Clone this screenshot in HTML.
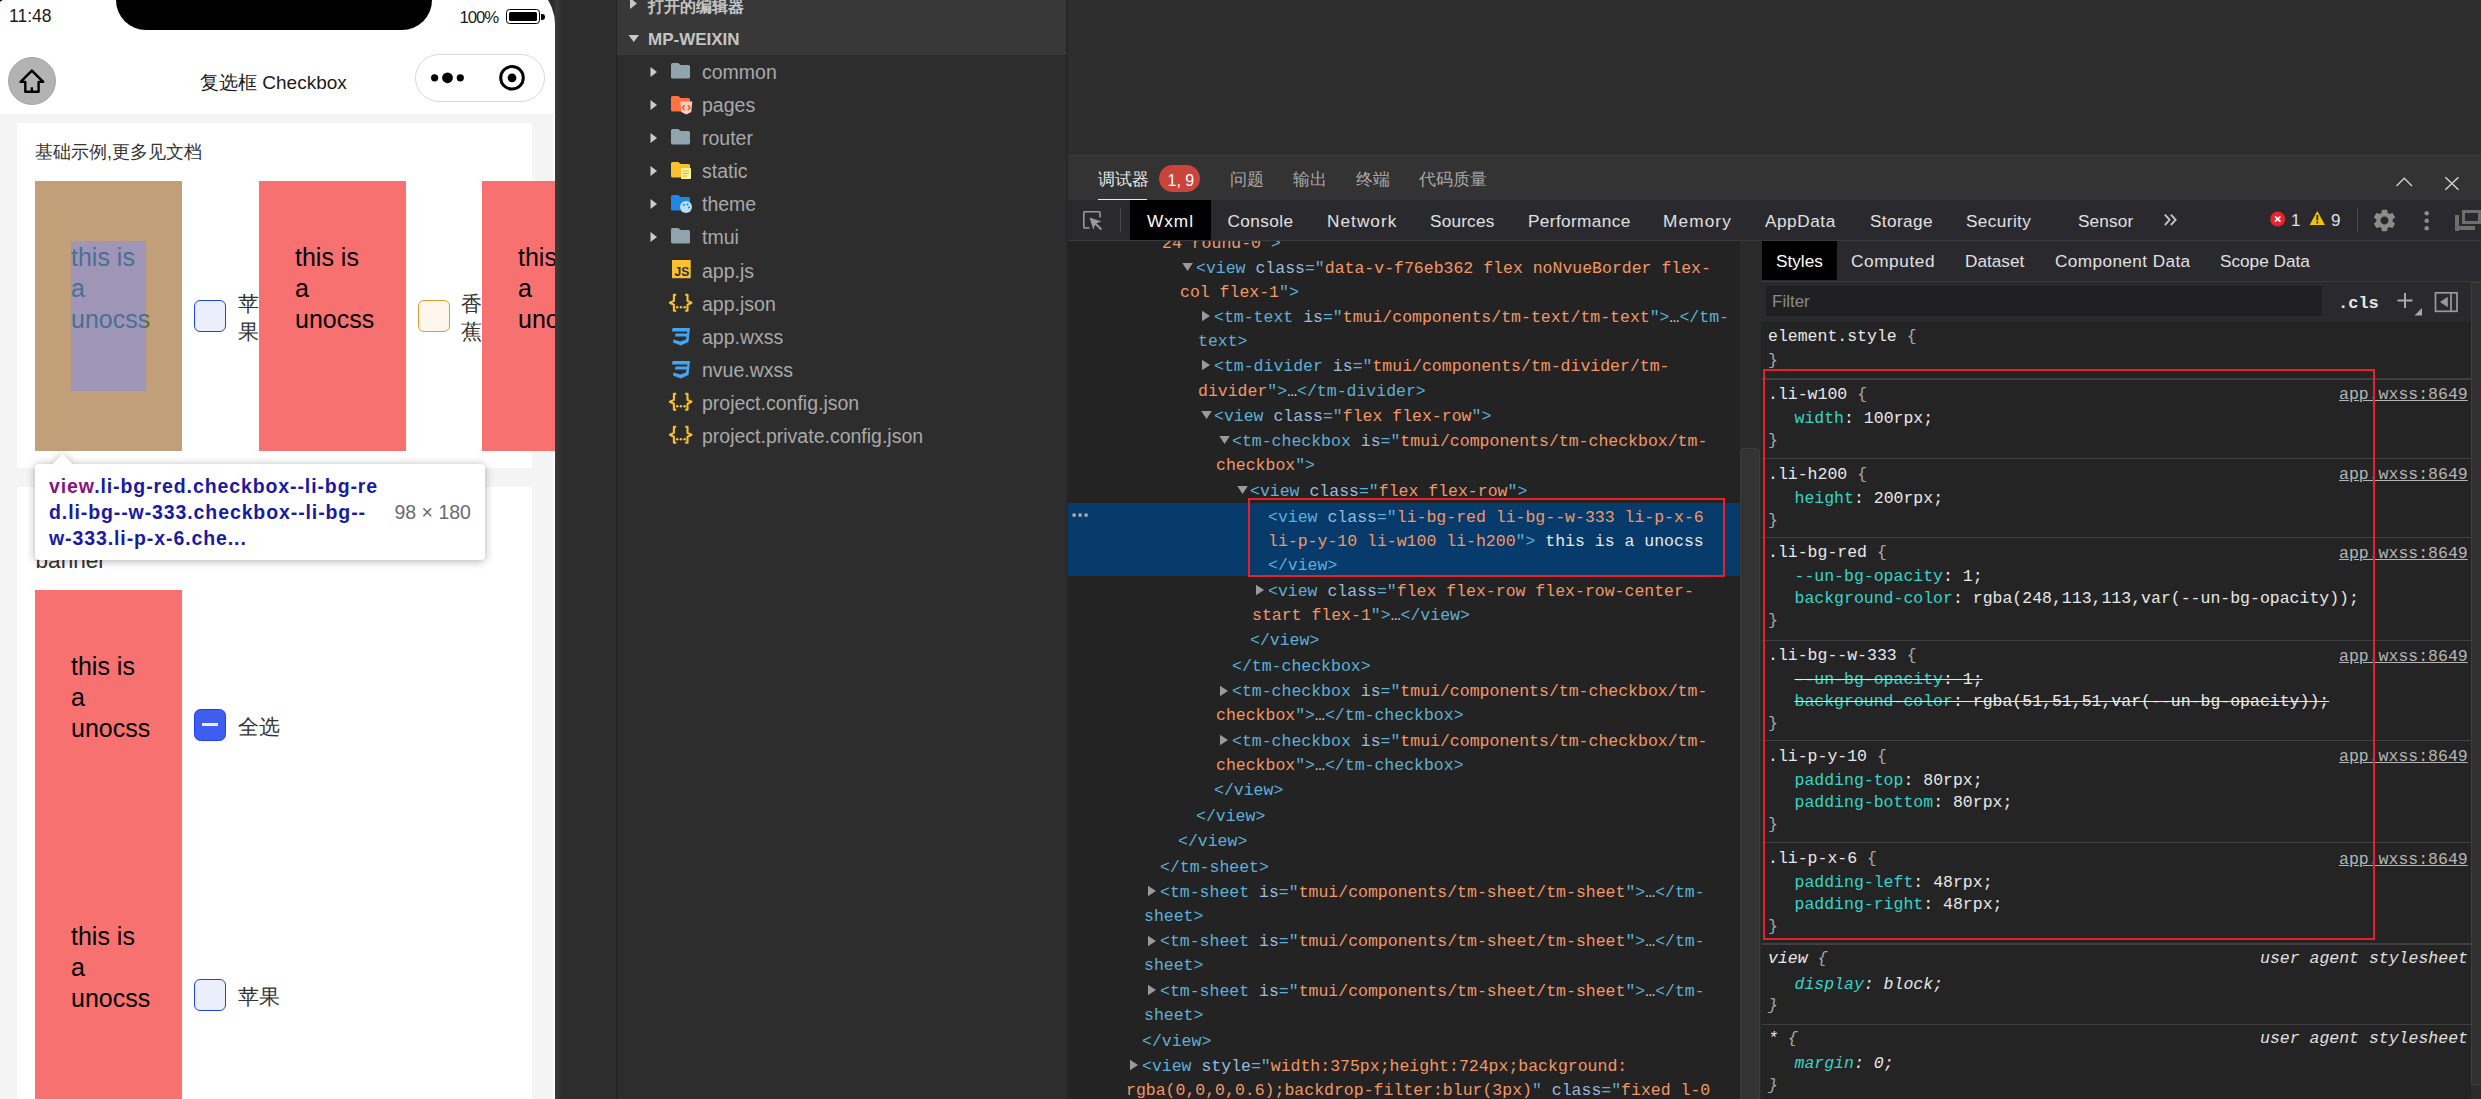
<!DOCTYPE html>
<html><head><meta charset="utf-8"><title>WeChat DevTools</title>
<style>
html,body{margin:0;padding:0;}
body{width:2481px;height:1099px;overflow:hidden;position:relative;font-family:'Liberation Sans', sans-serif;}
div{position:absolute;}
span{position:static;}
</style></head><body>
<div style="left:0px;top:0px;width:2481px;height:1099px;background:#2e2e2e"></div>
<div style="left:0;top:-20px;width:555px;height:1119px;background:#fff;border-top-right-radius:44px;overflow:hidden">
<div style="left:0;top:20px;width:555px;height:1099px;position:absolute">
<div style="left:0px;top:114px;width:553px;height:985px;background:#f4f4f4"></div>
<div style="left:116px;top:-40px;width:316px;height:70px;background:#000;border-radius:0 0 30px 30px"></div>
<div style="left:-6px;top:-6px;width:9px;height:8px;background:#000;border-radius:50%"></div>
<div style="left:9px;top:4.84px;line-height:23px;font-family:'Liberation Sans', sans-serif;font-size:17.5px;color:#1a1a1a;white-space:pre;">11:48</div>
<div style="left:459.5px;top:7.38px;line-height:22px;font-family:'Liberation Sans', sans-serif;font-size:16.8px;color:#1a1a1a;white-space:pre;letter-spacing:-1.05px">100%</div>
<div style="left:506px;top:8.9px;width:34px;height:15px;border:1.6px solid #000;border-radius:3.5px;box-sizing:border-box"></div>
<div style="left:509.3px;top:12.3px;width:27.4px;height:9px;background:#000;border-radius:1.5px"></div>
<div style="left:541px;top:14px;width:3.5px;height:5.5px;background:#000;border-radius:0 3px 3px 0"></div>
<div style="left:8px;top:57px;width:48px;height:48px;background:#b3b3b3;border-radius:50%;border:1px solid #a6a6a6;box-sizing:border-box"></div>
<svg style="position:absolute;left:16px;top:65px;" width="32" height="32" viewBox="0 0 32 32"><path d="M4.6 16.9 L15.9 5.6 L27.2 16.9 H22.6 V26.75 H9.3 V16.9 Z" fill="none" stroke="#000" stroke-width="2.4" stroke-linejoin="round"/><path d="M15.85 22.3 V26.75" stroke="#000" stroke-width="2.3"/></svg>
<div style="left:200px;top:69.92px;line-height:25px;font-family:'Liberation Sans', sans-serif;font-size:19px;color:#1a1a1a;white-space:pre;">复选框 Checkbox</div>
<div style="left:414.5px;top:54px;width:130.5px;height:47.5px;border:1px solid #d9d9d9;border-radius:24px;box-sizing:border-box;background:#fff"></div>
<svg style="position:absolute;left:425px;top:63px;" width="110" height="30" viewBox="0 0 110 30"><circle cx="9.6" cy="14.8" r="3.6" fill="#000"/><circle cx="22.5" cy="14.8" r="5.4" fill="#000"/><circle cx="35.3" cy="14.8" r="3.6" fill="#000"/><circle cx="87" cy="14.8" r="11.3" fill="none" stroke="#000" stroke-width="3"/><circle cx="87" cy="14.8" r="4.4" fill="#000"/></svg>
<div style="left:17px;top:123px;width:515px;height:345px;background:#fff"></div>
<div style="left:35px;top:141.40px;line-height:23px;font-family:'Liberation Sans', sans-serif;font-size:17.6px;color:#333;white-space:pre;">基础示例,更多见文档</div>
<div style="left:35px;top:181px;width:147px;height:270px;background:#f87171"></div>
<div style="left:71px;top:241.34px;line-height:32px;font-family:'Liberation Sans', sans-serif;font-size:25px;color:#000;white-space:pre;">this is</div>
<div style="left:71px;top:272.34px;line-height:32px;font-family:'Liberation Sans', sans-serif;font-size:25px;color:#000;white-space:pre;">a</div>
<div style="left:71px;top:303.34px;line-height:32px;font-family:'Liberation Sans', sans-serif;font-size:25px;color:#000;white-space:pre;">unocss</div>
<div style="left:259px;top:181px;width:147px;height:270px;background:#f87171"></div>
<div style="left:295px;top:241.34px;line-height:32px;font-family:'Liberation Sans', sans-serif;font-size:25px;color:#000;white-space:pre;">this is</div>
<div style="left:295px;top:272.34px;line-height:32px;font-family:'Liberation Sans', sans-serif;font-size:25px;color:#000;white-space:pre;">a</div>
<div style="left:295px;top:303.34px;line-height:32px;font-family:'Liberation Sans', sans-serif;font-size:25px;color:#000;white-space:pre;">unocss</div>
<div style="left:482px;top:181px;width:147px;height:270px;background:#f87171"></div>
<div style="left:518px;top:241.34px;line-height:32px;font-family:'Liberation Sans', sans-serif;font-size:25px;color:#000;white-space:pre;">this is</div>
<div style="left:518px;top:272.34px;line-height:32px;font-family:'Liberation Sans', sans-serif;font-size:25px;color:#000;white-space:pre;">a</div>
<div style="left:518px;top:303.34px;line-height:32px;font-family:'Liberation Sans', sans-serif;font-size:25px;color:#000;white-space:pre;">unocss</div>
<div style="left:35px;top:181px;width:147px;height:270px;box-sizing:border-box;border-style:solid;border-color:rgba(147,196,125,.55);border-width:60px 36px"></div>
<div style="left:71px;top:241px;width:75px;height:150px;background:rgba(111,168,220,.66)"></div>
<div style="left:194.3px;top:300px;width:31.5px;height:31.5px;box-sizing:border-box;border:1.6px solid #1f3ff2;border-radius:6px;background:#ebeefc"></div>
<div style="left:237.5px;top:290.22px;line-height:27px;font-family:'Liberation Sans', sans-serif;font-size:21px;color:#333;white-space:pre;">苹</div>
<div style="left:237.5px;top:318.22px;line-height:27px;font-family:'Liberation Sans', sans-serif;font-size:21px;color:#333;white-space:pre;">果</div>
<div style="left:418px;top:300px;width:31.5px;height:31.5px;box-sizing:border-box;border:1.6px solid #e39a2c;border-radius:6px;background:#fff7ec"></div>
<div style="left:461px;top:290.22px;line-height:27px;font-family:'Liberation Sans', sans-serif;font-size:21px;color:#333;white-space:pre;">香</div>
<div style="left:461px;top:318.22px;line-height:27px;font-family:'Liberation Sans', sans-serif;font-size:21px;color:#333;white-space:pre;">蕉</div>
<div style="left:17px;top:487px;width:515px;height:612px;background:#fff"></div>
<div style="left:35.5px;top:545.67px;line-height:29px;font-family:'Liberation Sans', sans-serif;font-size:22.6px;color:#333;white-space:pre;">banner</div>
<div style="left:35px;top:590px;width:147px;height:509px;background:#f87171"></div>
<div style="left:71px;top:650.34px;line-height:32px;font-family:'Liberation Sans', sans-serif;font-size:25px;color:#000;white-space:pre;">this is</div>
<div style="left:71px;top:681.34px;line-height:32px;font-family:'Liberation Sans', sans-serif;font-size:25px;color:#000;white-space:pre;">a</div>
<div style="left:71px;top:712.34px;line-height:32px;font-family:'Liberation Sans', sans-serif;font-size:25px;color:#000;white-space:pre;">unocss</div>
<div style="left:71px;top:920.34px;line-height:32px;font-family:'Liberation Sans', sans-serif;font-size:25px;color:#000;white-space:pre;">this is</div>
<div style="left:71px;top:951.34px;line-height:32px;font-family:'Liberation Sans', sans-serif;font-size:25px;color:#000;white-space:pre;">a</div>
<div style="left:71px;top:982.34px;line-height:32px;font-family:'Liberation Sans', sans-serif;font-size:25px;color:#000;white-space:pre;">unocss</div>
<div style="left:194.1px;top:709px;width:31.8px;height:31.8px;box-sizing:border-box;border:1.3px solid #1c3ff0;border-radius:6.5px;background:#3f5ef0"></div>
<div style="left:202.1px;top:723.3px;width:16px;height:3px;background:#e8ecff"></div>
<div style="left:237.5px;top:713.22px;line-height:27px;font-family:'Liberation Sans', sans-serif;font-size:21px;color:#333;white-space:pre;">全选</div>
<div style="left:194.3px;top:979px;width:31.5px;height:31.5px;box-sizing:border-box;border:1.6px solid #1f3ff2;border-radius:6px;background:#ebeefc"></div>
<div style="left:237.5px;top:983.22px;line-height:27px;font-family:'Liberation Sans', sans-serif;font-size:21px;color:#333;white-space:pre;">苹果</div>
<svg style="position:absolute;left:20px;top:440px;filter:drop-shadow(0 1px 4px rgba(0,0,0,.32))" width="480" height="140" viewBox="0 0 480 140"><path d="M19 24 H32.5 L42.6 13.8 L52.4 24 H461 Q465 24 465 28 V116 Q465 120 461 120 H19 Q15 120 15 116 V28 Q15 24 19 24 Z" fill="#fff"/></svg>
<div style="left:49px;top:473.74px;line-height:25px;font-family:'Liberation Sans', sans-serif;font-size:19.5px;color:#1a1aa6;white-space:pre;font-weight:bold;letter-spacing:0.9px"><span style="color:#881280">view</span>.li-bg-red.checkbox--li-bg-re</div>
<div style="left:49px;top:499.74px;line-height:25px;font-family:'Liberation Sans', sans-serif;font-size:19.5px;color:#1a1aa6;white-space:pre;font-weight:bold;letter-spacing:0.9px">d.li-bg--w-333.checkbox--li-bg--</div>
<div style="left:49px;top:525.74px;line-height:25px;font-family:'Liberation Sans', sans-serif;font-size:19.5px;color:#1a1aa6;white-space:pre;font-weight:bold;letter-spacing:0.9px">w-333.li-p-x-6.che...</div>
<div style="left:394.5px;top:499.74px;line-height:25px;font-family:'Liberation Sans', sans-serif;font-size:19.5px;color:#6b6b6b;white-space:pre;">98 × 180</div>
</div></div>
<div style="left:555px;top:0px;width:7px;height:1099px;background:linear-gradient(90deg,#3b3b3b,#2e2e2e)"></div>
<div style="left:615.6px;top:0px;width:1.6px;height:1099px;background:#222222"></div>
<div style="left:617.2px;top:0px;width:448.8px;height:1099px;background:#2d2d2d"></div>
<div style="left:617.2px;top:0px;width:448.8px;height:55px;background:#383838"></div>
<div style="left:1066px;top:0px;width:2px;height:1099px;background:#272727"></div>
<svg style="position:absolute;left:626px;top:-2px;" width="14" height="14" viewBox="0 0 14 14"><path d="M4 0 L11 5.5 L4 11 Z" fill="#c8c8c8"/></svg>
<div style="left:648px;top:-3.65px;line-height:21px;font-family:'Liberation Sans', sans-serif;font-size:16.3px;color:#c5c5c5;white-space:pre;font-weight:bold">打开的编辑器</div>
<svg style="position:absolute;left:628px;top:34px;" width="14" height="10" viewBox="0 0 14 10"><path d="M0.5 1 L11 1 L5.75 8 Z" fill="#c8c8c8"/></svg>
<div style="left:648px;top:28.71px;line-height:22px;font-family:'Liberation Sans', sans-serif;font-size:17px;color:#c5c5c5;white-space:pre;font-weight:bold">MP-WEIXIN</div>
<svg style="position:absolute;left:649px;top:66px;" width="10" height="12" viewBox="0 0 10 12"><path d="M1.5 1 L8 6 L1.5 11 Z" fill="#cccccc"/></svg>
<svg style="position:absolute;left:670px;top:62px;" width="22" height="18" viewBox="0 0 22 18"><path d="M1 2.5 Q1 1 2.5 1 H8.5 L10.5 3 H18.5 Q20 3 20 4.5 V15 Q20 16.5 18.5 16.5 H2.5 Q1 16.5 1 15 Z" fill="#90a4ae"/></svg>
<div style="left:702px;top:59.94px;line-height:25px;font-family:'Liberation Sans', sans-serif;font-size:19.5px;color:#a9a9a9;white-space:pre;">common</div>
<svg style="position:absolute;left:649px;top:99px;" width="10" height="12" viewBox="0 0 10 12"><path d="M1.5 1 L8 6 L1.5 11 Z" fill="#cccccc"/></svg>
<svg style="position:absolute;left:670px;top:95px;" width="24" height="20" viewBox="0 0 24 20"><path d="M1 2.5 Q1 1 2.5 1 H8.5 L10.5 3 H18.5 Q20 3 20 4.5 V15 Q20 16.5 18.5 16.5 H2.5 Q1 16.5 1 15 Z" fill="#ff7043"/><path d="M10.3 6.4 H22.3 L21.3 17 L16.3 19.4 L11.3 17 Z" fill="#ffccbc"/><path d="M14.6 10.2 L12.6 12.6 L14.6 15 M18 10.2 L20 12.6 L18 15" stroke="#f4511e" stroke-width="1.4" fill="none"/></svg>
<div style="left:702px;top:92.94px;line-height:25px;font-family:'Liberation Sans', sans-serif;font-size:19.5px;color:#a9a9a9;white-space:pre;">pages</div>
<svg style="position:absolute;left:649px;top:132px;" width="10" height="12" viewBox="0 0 10 12"><path d="M1.5 1 L8 6 L1.5 11 Z" fill="#cccccc"/></svg>
<svg style="position:absolute;left:670px;top:128px;" width="22" height="18" viewBox="0 0 22 18"><path d="M1 2.5 Q1 1 2.5 1 H8.5 L10.5 3 H18.5 Q20 3 20 4.5 V15 Q20 16.5 18.5 16.5 H2.5 Q1 16.5 1 15 Z" fill="#90a4ae"/></svg>
<div style="left:702px;top:125.94px;line-height:25px;font-family:'Liberation Sans', sans-serif;font-size:19.5px;color:#a9a9a9;white-space:pre;">router</div>
<svg style="position:absolute;left:649px;top:165px;" width="10" height="12" viewBox="0 0 10 12"><path d="M1.5 1 L8 6 L1.5 11 Z" fill="#cccccc"/></svg>
<svg style="position:absolute;left:670px;top:161px;" width="24" height="20" viewBox="0 0 24 20"><path d="M1 2.5 Q1 1 2.5 1 H8.5 L10.5 3 H18.5 Q20 3 20 4.5 V15 Q20 16.5 18.5 16.5 H2.5 Q1 16.5 1 15 Z" fill="#fbc02d"/><rect x="11" y="7" width="10" height="11" rx="1" fill="#fff59d"/><path d="M13 10 H19 M13 12.5 H19 M13 15 H17" stroke="#f9a825" stroke-width="1.2"/></svg>
<div style="left:702px;top:158.94px;line-height:25px;font-family:'Liberation Sans', sans-serif;font-size:19.5px;color:#a9a9a9;white-space:pre;">static</div>
<svg style="position:absolute;left:649px;top:198px;" width="10" height="12" viewBox="0 0 10 12"><path d="M1.5 1 L8 6 L1.5 11 Z" fill="#cccccc"/></svg>
<svg style="position:absolute;left:670px;top:194px;" width="24" height="20" viewBox="0 0 24 20"><path d="M1 2.5 Q1 1 2.5 1 H8.5 L10.5 3 H18.5 Q20 3 20 4.5 V15 Q20 16.5 18.5 16.5 H2.5 Q1 16.5 1 15 Z" fill="#1e88e5"/><circle cx="16" cy="13" r="6" fill="#bbdefb"/><circle cx="14" cy="11" r="1.1" fill="#1e88e5"/><circle cx="17.5" cy="10.5" r="1.1" fill="#1e88e5"/><circle cx="19" cy="13.5" r="1.1" fill="#1e88e5"/></svg>
<div style="left:702px;top:191.94px;line-height:25px;font-family:'Liberation Sans', sans-serif;font-size:19.5px;color:#a9a9a9;white-space:pre;">theme</div>
<svg style="position:absolute;left:649px;top:231px;" width="10" height="12" viewBox="0 0 10 12"><path d="M1.5 1 L8 6 L1.5 11 Z" fill="#cccccc"/></svg>
<svg style="position:absolute;left:670px;top:227px;" width="22" height="18" viewBox="0 0 22 18"><path d="M1 2.5 Q1 1 2.5 1 H8.5 L10.5 3 H18.5 Q20 3 20 4.5 V15 Q20 16.5 18.5 16.5 H2.5 Q1 16.5 1 15 Z" fill="#90a4ae"/></svg>
<div style="left:702px;top:224.94px;line-height:25px;font-family:'Liberation Sans', sans-serif;font-size:19.5px;color:#a9a9a9;white-space:pre;">tmui</div>
<svg style="position:absolute;left:671.5px;top:260px;" width="19" height="19" viewBox="0 0 19 19"><rect x="0" y="0" width="18.7" height="18.2" fill="#fbc02d"/><text x="17.3" y="16.3" font-family="Liberation Sans" font-weight="bold" font-size="12" fill="#2d2d2d" text-anchor="end">JS</text></svg>
<div style="left:702px;top:258.94px;line-height:25px;font-family:'Liberation Sans', sans-serif;font-size:19.5px;color:#a9a9a9;white-space:pre;">app.js</div>
<svg style="position:absolute;left:668px;top:293px;" width="26" height="20" viewBox="0 0 26 20"><path d="M8.2 1.8 H5.9 V7.9 L1.9 9.8 L5.9 11.7 V17.8 H8.2 M17.2 1.8 H19.5 V7.9 L23.5 9.8 L19.5 11.7 V17.8 H17.2" fill="none" stroke="#fbc02d" stroke-width="2.1" stroke-linejoin="round"/><circle cx="9.2" cy="14.2" r="1.25" fill="#fbc02d"/><circle cx="12.9" cy="14.2" r="1.25" fill="#fbc02d"/><circle cx="16.6" cy="14.2" r="1.25" fill="#fbc02d"/></svg>
<div style="left:702px;top:291.94px;line-height:25px;font-family:'Liberation Sans', sans-serif;font-size:19.5px;color:#a9a9a9;white-space:pre;">app.json</div>
<svg style="position:absolute;left:670px;top:327px;" width="22" height="20" viewBox="0 0 22 20"><path d="M2.5 1 H20 L18.5 15 L10.8 18.5 L3 15.5 L3.5 12.5 L10.5 14.5 L16 12.5 L16.5 9.5 H5 L5.5 6.5 H17 L17.3 4.5 H2 Z" fill="#42a5f5"/></svg>
<div style="left:702px;top:324.94px;line-height:25px;font-family:'Liberation Sans', sans-serif;font-size:19.5px;color:#a9a9a9;white-space:pre;">app.wxss</div>
<svg style="position:absolute;left:670px;top:360px;" width="22" height="20" viewBox="0 0 22 20"><path d="M2.5 1 H20 L18.5 15 L10.8 18.5 L3 15.5 L3.5 12.5 L10.5 14.5 L16 12.5 L16.5 9.5 H5 L5.5 6.5 H17 L17.3 4.5 H2 Z" fill="#42a5f5"/></svg>
<div style="left:702px;top:357.94px;line-height:25px;font-family:'Liberation Sans', sans-serif;font-size:19.5px;color:#a9a9a9;white-space:pre;">nvue.wxss</div>
<svg style="position:absolute;left:668px;top:392px;" width="26" height="20" viewBox="0 0 26 20"><path d="M8.2 1.8 H5.9 V7.9 L1.9 9.8 L5.9 11.7 V17.8 H8.2 M17.2 1.8 H19.5 V7.9 L23.5 9.8 L19.5 11.7 V17.8 H17.2" fill="none" stroke="#fbc02d" stroke-width="2.1" stroke-linejoin="round"/><circle cx="9.2" cy="14.2" r="1.25" fill="#fbc02d"/><circle cx="12.9" cy="14.2" r="1.25" fill="#fbc02d"/><circle cx="16.6" cy="14.2" r="1.25" fill="#fbc02d"/></svg>
<div style="left:702px;top:390.94px;line-height:25px;font-family:'Liberation Sans', sans-serif;font-size:19.5px;color:#a9a9a9;white-space:pre;">project.config.json</div>
<svg style="position:absolute;left:668px;top:425px;" width="26" height="20" viewBox="0 0 26 20"><path d="M8.2 1.8 H5.9 V7.9 L1.9 9.8 L5.9 11.7 V17.8 H8.2 M17.2 1.8 H19.5 V7.9 L23.5 9.8 L19.5 11.7 V17.8 H17.2" fill="none" stroke="#fbc02d" stroke-width="2.1" stroke-linejoin="round"/><circle cx="9.2" cy="14.2" r="1.25" fill="#fbc02d"/><circle cx="12.9" cy="14.2" r="1.25" fill="#fbc02d"/><circle cx="16.6" cy="14.2" r="1.25" fill="#fbc02d"/></svg>
<div style="left:702px;top:423.94px;line-height:25px;font-family:'Liberation Sans', sans-serif;font-size:19.5px;color:#a9a9a9;white-space:pre;">project.private.config.json</div>
<div style="left:1068px;top:155px;width:1413px;height:1px;background:#3c3c3c"></div>
<div style="left:1068px;top:156px;width:1413px;height:44px;background:#333333"></div>
<div style="left:1098px;top:168.78px;line-height:21px;font-family:'Liberation Sans', sans-serif;font-size:16.5px;color:#e6e6e6;white-space:pre;">调试器</div>
<div style="left:1098px;top:198.5px;width:49px;height:1.5px;background:#e6e6e6"></div>
<div style="left:1159px;top:165px;width:41px;height:27px;background:#c9443b;border-radius:13.5px"></div>
<div style="left:1167.5px;top:169.56px;line-height:21px;font-family:'Liberation Sans', sans-serif;font-size:16px;color:#ffffff;white-space:pre;">1, 9</div>
<div style="left:1230px;top:168.78px;line-height:21px;font-family:'Liberation Sans', sans-serif;font-size:16.5px;color:#a8a8a8;white-space:pre;">问题</div>
<div style="left:1293px;top:168.78px;line-height:21px;font-family:'Liberation Sans', sans-serif;font-size:16.5px;color:#a8a8a8;white-space:pre;">输出</div>
<div style="left:1356px;top:168.78px;line-height:21px;font-family:'Liberation Sans', sans-serif;font-size:16.5px;color:#a8a8a8;white-space:pre;">终端</div>
<div style="left:1419px;top:168.78px;line-height:21px;font-family:'Liberation Sans', sans-serif;font-size:16.5px;color:#a8a8a8;white-space:pre;">代码质量</div>
<svg style="position:absolute;left:2392px;top:172px;" width="24" height="18" viewBox="0 0 24 18"><path d="M4.5 14 L12.2 6.3 L20 14" fill="none" stroke="#d0d0d0" stroke-width="1.4"/></svg>
<svg style="position:absolute;left:2442px;top:174px;" width="20" height="18" viewBox="0 0 20 18"><path d="M3.3 3.2 L16.5 15.8 M16.5 3.2 L3.3 15.8" fill="none" stroke="#d0d0d0" stroke-width="1.5"/></svg>
<div style="left:1068px;top:200px;width:1413px;height:40px;background:#2a2a2e"></div>
<div style="left:1068px;top:239.5px;width:1413px;height:1px;background:#3a3a3a"></div>
<svg style="position:absolute;left:1082px;top:210px;" width="24" height="24" viewBox="0 0 24 24"><path d="M7.5 18 H2.5 Q1.8 18 1.8 17.3 V2.5 Q1.8 1.8 2.5 1.8 H17.3 Q18 1.8 18 2.5 V7.5" fill="none" stroke="#9a9a9a" stroke-width="1.6"/><path d="M7.5 7.5 L19.5 11.5 L14.5 13.3 L20 18.8 L18.6 20.2 L13.1 14.7 L11.3 19.7 Z" fill="#9a9a9a"/></svg>
<div style="left:1119.5px;top:208px;width:1.2px;height:24px;background:#4a4a4a"></div>
<div style="left:1130px;top:200px;width:80.5px;height:40px;background:#000"></div>
<div style="left:1147px;top:210.04px;line-height:22px;font-family:'Liberation Sans', sans-serif;font-size:17.2px;color:#ffffff;white-space:pre;letter-spacing:1.0px">Wxml</div>
<div style="left:1227.5px;top:210.04px;line-height:22px;font-family:'Liberation Sans', sans-serif;font-size:17.2px;color:#e0e0e0;white-space:pre;letter-spacing:0.4px">Console</div>
<div style="left:1327px;top:210.04px;line-height:22px;font-family:'Liberation Sans', sans-serif;font-size:17.2px;color:#e0e0e0;white-space:pre;letter-spacing:1.05px">Network</div>
<div style="left:1430px;top:210.04px;line-height:22px;font-family:'Liberation Sans', sans-serif;font-size:17.2px;color:#e0e0e0;white-space:pre;letter-spacing:0.2px">Sources</div>
<div style="left:1528px;top:210.04px;line-height:22px;font-family:'Liberation Sans', sans-serif;font-size:17.2px;color:#e0e0e0;white-space:pre;letter-spacing:0.38px">Performance</div>
<div style="left:1663px;top:210.04px;line-height:22px;font-family:'Liberation Sans', sans-serif;font-size:17.2px;color:#e0e0e0;white-space:pre;letter-spacing:1.15px">Memory</div>
<div style="left:1765px;top:210.04px;line-height:22px;font-family:'Liberation Sans', sans-serif;font-size:17.2px;color:#e0e0e0;white-space:pre;letter-spacing:0.55px">AppData</div>
<div style="left:1870px;top:210.04px;line-height:22px;font-family:'Liberation Sans', sans-serif;font-size:17.2px;color:#e0e0e0;white-space:pre;letter-spacing:0.4px">Storage</div>
<div style="left:1966px;top:210.04px;line-height:22px;font-family:'Liberation Sans', sans-serif;font-size:17.2px;color:#e0e0e0;white-space:pre;letter-spacing:0.4px">Security</div>
<div style="left:2078px;top:210.04px;line-height:22px;font-family:'Liberation Sans', sans-serif;font-size:17.2px;color:#e0e0e0;white-space:pre;letter-spacing:0.15px">Sensor</div>
<svg style="position:absolute;left:2160px;top:210px;" width="20" height="20" viewBox="0 0 20 20"><path d="M4.9 4.6 L9.6 9.8 L4.9 15 M10.9 4.6 L15.6 9.8 L10.9 15" fill="none" stroke="#c4c4c4" stroke-width="1.9"/></svg>
<svg style="position:absolute;left:2270px;top:211px;" width="16" height="16" viewBox="0 0 16 16"><circle cx="7.7" cy="8" r="7.5" fill="#e8232b"/><path d="M5 5.3 L10.4 10.7 M10.4 5.3 L5 10.7" stroke="#fff" stroke-width="1.7"/></svg>
<div style="left:2291px;top:210.11px;line-height:22px;font-family:'Liberation Sans', sans-serif;font-size:17px;color:#e0e0e0;white-space:pre;">1</div>
<svg style="position:absolute;left:2309px;top:210px;" width="17" height="16" viewBox="0 0 17 16"><path d="M8.3 1 L16 15 H0.6 Z" fill="#f4c20d"/><rect x="7.4" y="5" width="1.8" height="5.5" fill="#2a2a2e"/><rect x="7.4" y="11.6" width="1.8" height="1.8" fill="#2a2a2e"/></svg>
<div style="left:2331px;top:210.11px;line-height:22px;font-family:'Liberation Sans', sans-serif;font-size:17px;color:#e0e0e0;white-space:pre;">9</div>
<div style="left:2356.5px;top:208px;width:1.2px;height:24px;background:#4a4a4a"></div>
<svg style="position:absolute;left:2370.5px;top:206.5px;" width="27" height="27" viewBox="0 0 27 27"><svg viewBox="0 0 24 24" width="27" height="27"><path fill="#8c8c8c" d="M19.14,12.94c0.04-0.3,0.06-0.61,0.06-0.94c0-0.32-0.02-0.64-0.07-0.94l2.03-1.58c0.18-0.14,0.23-0.41,0.12-0.61l-1.92-3.32c-0.12-0.22-0.37-0.29-0.59-0.22l-2.39,0.96c-0.5-0.38-1.03-0.7-1.62-0.94L14.4,2.81c-0.04-0.24-0.24-0.41-0.48-0.41h-3.84c-0.24,0-0.43,0.17-0.47,0.41L9.25,5.35C8.66,5.59,8.12,5.92,7.63,6.29L5.24,5.33c-0.22-0.08-0.47,0-0.59,0.22L2.74,8.87C2.62,9.08,2.66,9.34,2.86,9.48l2.03,1.58C4.84,11.36,4.8,11.69,4.8,12s0.02,0.64,0.07,0.94l-2.03,1.58c-0.18,0.14-0.23,0.41-0.12,0.61l1.92,3.32c0.12,0.22,0.37,0.29,0.59,0.22l2.39-0.96c0.5,0.38,1.03,0.7,1.62,0.94l0.36,2.54c0.05,0.24,0.24,0.41,0.48,0.41h3.84c0.24,0,0.44-0.17,0.47-0.41l0.36-2.54c0.59-0.24,1.13-0.56,1.62-0.94l2.39,0.96c0.22,0.08,0.47,0,0.59-0.22l1.92-3.32c0.12-0.22,0.07-0.47-0.12-0.61L19.14,12.94z M12,15.6c-1.98,0-3.6-1.62-3.6-3.6s1.62-3.6,3.6-3.6s3.6,1.62,3.6,3.6S13.98,15.6,12,15.6z"/></svg></svg>
<svg style="position:absolute;left:2421px;top:209px;" width="10" height="23" viewBox="0 0 10 23"><circle cx="5.7" cy="4.2" r="2.3" fill="#8c8c8c"/><circle cx="5.7" cy="11.7" r="2.3" fill="#8c8c8c"/><circle cx="5.7" cy="19.2" r="2.3" fill="#8c8c8c"/></svg>
<div style="left:2461.5px;top:209.6px;width:19.5px;height:14px;box-sizing:border-box;border:3.6px solid #6e6e6e"></div>
<div style="left:2481px;top:0px;width:0px;height:0px;"></div>
<div style="left:2455.3px;top:215px;width:4.2px;height:15.5px;background:#6e6e6e"></div>
<div style="left:2455.3px;top:226.3px;width:19.7px;height:4.2px;background:#6e6e6e"></div>
<div style="left:1068px;top:240.5px;width:672px;height:858.5px;background:#232323"></div>
<div style="left:1739.5px;top:240.5px;width:21px;height:858.5px;background:#2b2b2b"></div>
<div style="left:1739.5px;top:447.5px;width:20px;height:652px;background:#333333;border:1px solid #3c3c3c;border-bottom:none;border-radius:4px 4px 0 0;box-sizing:border-box"></div>
<div style="left:1068px;top:503px;width:671.5px;height:73px;background:#073b6b"></div>
<svg style="position:absolute;left:1070px;top:510px;" width="22" height="10" viewBox="0 0 22 10"><rect x="2.5" y="3.5" width="3.2" height="3.2" fill="#b0b0b0"/><rect x="8.5" y="3.5" width="3.2" height="3.2" fill="#b0b0b0"/><rect x="14.5" y="3.5" width="3.2" height="3.2" fill="#b0b0b0"/></svg>
<div style="left:1068px;top:240.5px;width:672px;height:30px;overflow:hidden">
<div style="left:94px;top:-7.90px;line-height:22px;font-family:'Liberation Mono', monospace;font-size:16.5px;white-space:pre"><span style="color:#f29766">24 round-0</span><span style="color:#5db0d7">"</span><span style="color:#5db0d7">&gt;</span></div>
</div>
<svg style="position:absolute;left:1181.5px;top:262px;" width="12" height="10" viewBox="0 0 12 10"><path d="M0.3 1 L10.8 1 L5.55 9 Z" fill="#9a9a9a"/></svg>
<svg style="position:absolute;left:1200.5px;top:310px;" width="10" height="12" viewBox="0 0 10 12"><path d="M1 0.8 L9 6 L1 11.2 Z" fill="#9a9a9a"/></svg>
<svg style="position:absolute;left:1200.5px;top:359px;" width="10" height="12" viewBox="0 0 10 12"><path d="M1 0.8 L9 6 L1 11.2 Z" fill="#9a9a9a"/></svg>
<svg style="position:absolute;left:1200.5px;top:410px;" width="12" height="10" viewBox="0 0 12 10"><path d="M0.3 1 L10.8 1 L5.55 9 Z" fill="#9a9a9a"/></svg>
<svg style="position:absolute;left:1218.5px;top:435px;" width="12" height="10" viewBox="0 0 12 10"><path d="M0.3 1 L10.8 1 L5.55 9 Z" fill="#9a9a9a"/></svg>
<svg style="position:absolute;left:1236.5px;top:485px;" width="12" height="10" viewBox="0 0 12 10"><path d="M0.3 1 L10.8 1 L5.55 9 Z" fill="#9a9a9a"/></svg>
<svg style="position:absolute;left:1254.5px;top:584px;" width="10" height="12" viewBox="0 0 10 12"><path d="M1 0.8 L9 6 L1 11.2 Z" fill="#9a9a9a"/></svg>
<svg style="position:absolute;left:1218.5px;top:684.5px;" width="10" height="12" viewBox="0 0 10 12"><path d="M1 0.8 L9 6 L1 11.2 Z" fill="#9a9a9a"/></svg>
<svg style="position:absolute;left:1218.5px;top:734px;" width="10" height="12" viewBox="0 0 10 12"><path d="M1 0.8 L9 6 L1 11.2 Z" fill="#9a9a9a"/></svg>
<svg style="position:absolute;left:1146.5px;top:885px;" width="10" height="12" viewBox="0 0 10 12"><path d="M1 0.8 L9 6 L1 11.2 Z" fill="#9a9a9a"/></svg>
<svg style="position:absolute;left:1146.5px;top:934.5px;" width="10" height="12" viewBox="0 0 10 12"><path d="M1 0.8 L9 6 L1 11.2 Z" fill="#9a9a9a"/></svg>
<svg style="position:absolute;left:1146.5px;top:984px;" width="10" height="12" viewBox="0 0 10 12"><path d="M1 0.8 L9 6 L1 11.2 Z" fill="#9a9a9a"/></svg>
<svg style="position:absolute;left:1128.5px;top:1059px;" width="10" height="12" viewBox="0 0 10 12"><path d="M1 0.8 L9 6 L1 11.2 Z" fill="#9a9a9a"/></svg>
<div style="left:1196px;top:258.00px;line-height:22px;font-family:'Liberation Mono', monospace;font-size:16.5px;color:#5db0d7;white-space:pre;"><span style="color:#5db0d7">&lt;view</span> <span style="color:#9bbbdc">class</span><span style="color:#5db0d7">="</span><span style="color:#f29766">data-v-f76eb362 flex noNvueBorder flex-</span></div>
<div style="left:1180px;top:282.00px;line-height:22px;font-family:'Liberation Mono', monospace;font-size:16.5px;color:#5db0d7;white-space:pre;"><span style="color:#f29766">col flex-1</span><span style="color:#5db0d7">"&gt;</span></div>
<div style="left:1214px;top:306.50px;line-height:22px;font-family:'Liberation Mono', monospace;font-size:16.5px;color:#5db0d7;white-space:pre;"><span style="color:#5db0d7">&lt;tm-text</span> <span style="color:#9bbbdc">is</span><span style="color:#5db0d7">="</span><span style="color:#f29766">tmui/components/tm-text/tm-text</span><span style="color:#5db0d7">"&gt;</span><span style="color:#cfd0d0">…</span><span style="color:#5db0d7">&lt;/tm-</span></div>
<div style="left:1198px;top:330.50px;line-height:22px;font-family:'Liberation Mono', monospace;font-size:16.5px;color:#5db0d7;white-space:pre;"><span style="color:#5db0d7">text&gt;</span></div>
<div style="left:1214px;top:355.50px;line-height:22px;font-family:'Liberation Mono', monospace;font-size:16.5px;color:#5db0d7;white-space:pre;"><span style="color:#5db0d7">&lt;tm-divider</span> <span style="color:#9bbbdc">is</span><span style="color:#5db0d7">="</span><span style="color:#f29766">tmui/components/tm-divider/tm-</span></div>
<div style="left:1198px;top:380.50px;line-height:22px;font-family:'Liberation Mono', monospace;font-size:16.5px;color:#5db0d7;white-space:pre;"><span style="color:#f29766">divider</span><span style="color:#5db0d7">"&gt;</span><span style="color:#cfd0d0">…</span><span style="color:#5db0d7">&lt;/tm-divider&gt;</span></div>
<div style="left:1214px;top:405.50px;line-height:22px;font-family:'Liberation Mono', monospace;font-size:16.5px;color:#5db0d7;white-space:pre;"><span style="color:#5db0d7">&lt;view</span> <span style="color:#9bbbdc">class</span><span style="color:#5db0d7">="</span><span style="color:#f29766">flex flex-row</span><span style="color:#5db0d7">"&gt;</span></div>
<div style="left:1232px;top:430.50px;line-height:22px;font-family:'Liberation Mono', monospace;font-size:16.5px;color:#5db0d7;white-space:pre;"><span style="color:#5db0d7">&lt;tm-checkbox</span> <span style="color:#9bbbdc">is</span><span style="color:#5db0d7">="</span><span style="color:#f29766">tmui/components/tm-checkbox/tm-</span></div>
<div style="left:1216px;top:454.50px;line-height:22px;font-family:'Liberation Mono', monospace;font-size:16.5px;color:#5db0d7;white-space:pre;"><span style="color:#f29766">checkbox</span><span style="color:#5db0d7">"&gt;</span></div>
<div style="left:1250px;top:480.50px;line-height:22px;font-family:'Liberation Mono', monospace;font-size:16.5px;color:#5db0d7;white-space:pre;"><span style="color:#5db0d7">&lt;view</span> <span style="color:#9bbbdc">class</span><span style="color:#5db0d7">="</span><span style="color:#f29766">flex flex-row</span><span style="color:#5db0d7">"&gt;</span></div>
<div style="left:1268px;top:507.30px;line-height:22px;font-family:'Liberation Mono', monospace;font-size:16.5px;color:#5db0d7;white-space:pre;"><span style="color:#5db0d7">&lt;view</span> <span style="color:#9bbbdc">class</span><span style="color:#5db0d7">="</span><span style="color:#f29766">li-bg-red li-bg--w-333 li-p-x-6</span></div>
<div style="left:1268px;top:530.90px;line-height:22px;font-family:'Liberation Mono', monospace;font-size:16.5px;color:#5db0d7;white-space:pre;"><span style="color:#f29766">li-p-y-10 li-w100 li-h200</span><span style="color:#5db0d7">"&gt;</span><span style="color:#e8e8e8"> this is a unocss</span></div>
<div style="left:1268px;top:554.50px;line-height:22px;font-family:'Liberation Mono', monospace;font-size:16.5px;color:#5db0d7;white-space:pre;"><span style="color:#5db0d7">&lt;/view&gt;</span></div>
<div style="left:1268px;top:580.50px;line-height:22px;font-family:'Liberation Mono', monospace;font-size:16.5px;color:#5db0d7;white-space:pre;"><span style="color:#5db0d7">&lt;view</span> <span style="color:#9bbbdc">class</span><span style="color:#5db0d7">="</span><span style="color:#f29766">flex flex-row flex-row-center-</span></div>
<div style="left:1252px;top:605.10px;line-height:22px;font-family:'Liberation Mono', monospace;font-size:16.5px;color:#5db0d7;white-space:pre;"><span style="color:#f29766">start flex-1</span><span style="color:#5db0d7">"&gt;</span><span style="color:#cfd0d0">…</span><span style="color:#5db0d7">&lt;/view&gt;</span></div>
<div style="left:1250px;top:630.00px;line-height:22px;font-family:'Liberation Mono', monospace;font-size:16.5px;color:#5db0d7;white-space:pre;"><span style="color:#5db0d7">&lt;/view&gt;</span></div>
<div style="left:1232px;top:655.50px;line-height:22px;font-family:'Liberation Mono', monospace;font-size:16.5px;color:#5db0d7;white-space:pre;"><span style="color:#5db0d7">&lt;/tm-checkbox&gt;</span></div>
<div style="left:1232px;top:681.00px;line-height:22px;font-family:'Liberation Mono', monospace;font-size:16.5px;color:#5db0d7;white-space:pre;"><span style="color:#5db0d7">&lt;tm-checkbox</span> <span style="color:#9bbbdc">is</span><span style="color:#5db0d7">="</span><span style="color:#f29766">tmui/components/tm-checkbox/tm-</span></div>
<div style="left:1216px;top:705.20px;line-height:22px;font-family:'Liberation Mono', monospace;font-size:16.5px;color:#5db0d7;white-space:pre;"><span style="color:#f29766">checkbox</span><span style="color:#5db0d7">"&gt;</span><span style="color:#cfd0d0">…</span><span style="color:#5db0d7">&lt;/tm-checkbox&gt;</span></div>
<div style="left:1232px;top:730.50px;line-height:22px;font-family:'Liberation Mono', monospace;font-size:16.5px;color:#5db0d7;white-space:pre;"><span style="color:#5db0d7">&lt;tm-checkbox</span> <span style="color:#9bbbdc">is</span><span style="color:#5db0d7">="</span><span style="color:#f29766">tmui/components/tm-checkbox/tm-</span></div>
<div style="left:1216px;top:754.70px;line-height:22px;font-family:'Liberation Mono', monospace;font-size:16.5px;color:#5db0d7;white-space:pre;"><span style="color:#f29766">checkbox</span><span style="color:#5db0d7">"&gt;</span><span style="color:#cfd0d0">…</span><span style="color:#5db0d7">&lt;/tm-checkbox&gt;</span></div>
<div style="left:1214px;top:780.00px;line-height:22px;font-family:'Liberation Mono', monospace;font-size:16.5px;color:#5db0d7;white-space:pre;"><span style="color:#5db0d7">&lt;/view&gt;</span></div>
<div style="left:1196px;top:805.50px;line-height:22px;font-family:'Liberation Mono', monospace;font-size:16.5px;color:#5db0d7;white-space:pre;"><span style="color:#5db0d7">&lt;/view&gt;</span></div>
<div style="left:1178px;top:830.50px;line-height:22px;font-family:'Liberation Mono', monospace;font-size:16.5px;color:#5db0d7;white-space:pre;"><span style="color:#5db0d7">&lt;/view&gt;</span></div>
<div style="left:1160px;top:856.50px;line-height:22px;font-family:'Liberation Mono', monospace;font-size:16.5px;color:#5db0d7;white-space:pre;"><span style="color:#5db0d7">&lt;/tm-sheet&gt;</span></div>
<div style="left:1160px;top:881.50px;line-height:22px;font-family:'Liberation Mono', monospace;font-size:16.5px;color:#5db0d7;white-space:pre;"><span style="color:#5db0d7">&lt;tm-sheet</span> <span style="color:#9bbbdc">is</span><span style="color:#5db0d7">="</span><span style="color:#f29766">tmui/components/tm-sheet/tm-sheet</span><span style="color:#5db0d7">"&gt;</span><span style="color:#cfd0d0">…</span><span style="color:#5db0d7">&lt;/tm-</span></div>
<div style="left:1144px;top:905.70px;line-height:22px;font-family:'Liberation Mono', monospace;font-size:16.5px;color:#5db0d7;white-space:pre;"><span style="color:#5db0d7">sheet&gt;</span></div>
<div style="left:1160px;top:931.00px;line-height:22px;font-family:'Liberation Mono', monospace;font-size:16.5px;color:#5db0d7;white-space:pre;"><span style="color:#5db0d7">&lt;tm-sheet</span> <span style="color:#9bbbdc">is</span><span style="color:#5db0d7">="</span><span style="color:#f29766">tmui/components/tm-sheet/tm-sheet</span><span style="color:#5db0d7">"&gt;</span><span style="color:#cfd0d0">…</span><span style="color:#5db0d7">&lt;/tm-</span></div>
<div style="left:1144px;top:955.20px;line-height:22px;font-family:'Liberation Mono', monospace;font-size:16.5px;color:#5db0d7;white-space:pre;"><span style="color:#5db0d7">sheet&gt;</span></div>
<div style="left:1160px;top:980.50px;line-height:22px;font-family:'Liberation Mono', monospace;font-size:16.5px;color:#5db0d7;white-space:pre;"><span style="color:#5db0d7">&lt;tm-sheet</span> <span style="color:#9bbbdc">is</span><span style="color:#5db0d7">="</span><span style="color:#f29766">tmui/components/tm-sheet/tm-sheet</span><span style="color:#5db0d7">"&gt;</span><span style="color:#cfd0d0">…</span><span style="color:#5db0d7">&lt;/tm-</span></div>
<div style="left:1144px;top:1004.70px;line-height:22px;font-family:'Liberation Mono', monospace;font-size:16.5px;color:#5db0d7;white-space:pre;"><span style="color:#5db0d7">sheet&gt;</span></div>
<div style="left:1142px;top:1030.50px;line-height:22px;font-family:'Liberation Mono', monospace;font-size:16.5px;color:#5db0d7;white-space:pre;"><span style="color:#5db0d7">&lt;/view&gt;</span></div>
<div style="left:1142px;top:1055.50px;line-height:22px;font-family:'Liberation Mono', monospace;font-size:16.5px;color:#5db0d7;white-space:pre;"><span style="color:#5db0d7">&lt;view</span> <span style="color:#9bbbdc">style</span><span style="color:#5db0d7">="</span><span style="color:#f29766">width:375px;height:724px;background:</span></div>
<div style="left:1126px;top:1079.50px;line-height:22px;font-family:'Liberation Mono', monospace;font-size:16.5px;color:#5db0d7;white-space:pre;"><span style="color:#f29766">rgba(0,0,0,0.6);backdrop-filter:blur(3px)</span><span style="color:#5db0d7">"</span> <span style="color:#9bbbdc">class</span><span style="color:#5db0d7">="</span><span style="color:#f29766">fixed l-0</span></div>
<div style="left:1248px;top:497.5px;width:477px;height:79px;box-sizing:border-box;border:2px solid #e8202a"></div>
<div style="left:1761px;top:240.5px;width:1720px;height:858.5px;background:#242424"></div>
<div style="left:1761px;top:240.5px;width:720px;height:40px;background:#2a2a2e"></div>
<div style="left:1761px;top:280.5px;width:720px;height:1px;background:#3a3a3a"></div>
<div style="left:1761.5px;top:241px;width:75.5px;height:39px;background:#000"></div>
<div style="left:1776px;top:250.04px;line-height:22px;font-family:'Liberation Sans', sans-serif;font-size:17.2px;color:#ffffff;white-space:pre;letter-spacing:0px">Styles</div>
<div style="left:1851px;top:250.04px;line-height:22px;font-family:'Liberation Sans', sans-serif;font-size:17.2px;color:#e0e0e0;white-space:pre;letter-spacing:0.6px">Computed</div>
<div style="left:1965px;top:250.04px;line-height:22px;font-family:'Liberation Sans', sans-serif;font-size:17.2px;color:#e0e0e0;white-space:pre;letter-spacing:0px">Dataset</div>
<div style="left:2055px;top:250.04px;line-height:22px;font-family:'Liberation Sans', sans-serif;font-size:17.2px;color:#e0e0e0;white-space:pre;letter-spacing:0.4px">Component Data</div>
<div style="left:2220px;top:250.04px;line-height:22px;font-family:'Liberation Sans', sans-serif;font-size:17.2px;color:#e0e0e0;white-space:pre;letter-spacing:0px">Scope Data</div>
<div style="left:1761px;top:281.5px;width:710px;height:40px;background:#2a2a2e"></div>
<div style="left:1766px;top:286px;width:556px;height:29.5px;background:#202023"></div>
<div style="left:1772px;top:291.11px;line-height:22px;font-family:'Liberation Sans', sans-serif;font-size:17px;color:#8a8a8a;white-space:pre;">Filter</div>
<div style="left:2338px;top:292.67px;line-height:22px;font-family:'Liberation Mono', monospace;font-size:17px;color:#e8e8e8;white-space:pre;font-weight:bold">.cls</div>
<svg style="position:absolute;left:2395px;top:286px;" width="30" height="32" viewBox="0 0 30 32"><path d="M10 7 V22 M2.5 14.5 H17.5" stroke="#a8a8a8" stroke-width="2"/><path d="M27 22 L27 29.5 L19.5 29.5 Z" fill="#a8a8a8"/></svg>
<svg style="position:absolute;left:2434px;top:289px;" width="26" height="24" viewBox="0 0 26 24"><rect x="1.5" y="3.8" width="21.5" height="18.5" fill="none" stroke="#9a9a9a" stroke-width="1.7"/><path d="M17 3.8 V22.3" stroke="#9a9a9a" stroke-width="1.7"/><path d="M13.8 7.8 L6 13 L13.8 18.2 Z" fill="#9a9a9a"/></svg>
<div style="left:2471px;top:281.5px;width:10px;height:817.5px;background:#2b2b2b"></div>
<div style="left:2471px;top:281.5px;width:10px;height:803px;background:#303030;border:1px solid #3e3e3e;border-right:none;border-radius:3px 0 0 3px;box-sizing:border-box"></div>
<div style="left:1768px;top:326.00px;line-height:22px;font-family:'Liberation Mono', monospace;font-size:16.5px;color:#e8e8e8;white-space:pre;"><span style="color:#e8e8e8">element.style </span><span style="color:#a8a8a8">{</span></div>
<div style="left:1768px;top:350.00px;line-height:22px;font-family:'Liberation Mono', monospace;font-size:16.5px;color:#e8e8e8;white-space:pre;"><span style="color:#a8a8a8">}</span></div>
<div style="left:1762px;top:378.4px;width:709px;height:1.3px;background:#404040"></div>
<div style="left:1768px;top:383.70px;line-height:22px;font-family:'Liberation Mono', monospace;font-size:16.5px;color:#e8e8e8;white-space:pre;"><span style="color:#e8e8e8">.li-w100 </span><span style="color:#a8a8a8">{</span></div>
<div style="left:2339px;top:384.20px;line-height:21px;font-family:'Liberation Mono', monospace;font-size:16.5px;color:#b5b5b5;white-space:pre;text-decoration:underline;text-underline-offset:1px">app.wxss:8649</div>
<div style="left:1794.5px;top:408.00px;line-height:22px;font-family:'Liberation Mono', monospace;font-size:16.5px;color:#e8e8e8;white-space:pre;"><span style=""><span style="color:#35d4c7">width</span><span style="color:#e8e8e8">: </span><span style="color:#e8e8e8">100rpx;</span></span></div>
<div style="left:1768px;top:430.00px;line-height:22px;font-family:'Liberation Mono', monospace;font-size:16.5px;color:#e8e8e8;white-space:pre;"><span style="color:#a8a8a8">}</span></div>
<div style="left:1762px;top:458px;width:709px;height:1.3px;background:#404040"></div>
<div style="left:1768px;top:463.50px;line-height:22px;font-family:'Liberation Mono', monospace;font-size:16.5px;color:#e8e8e8;white-space:pre;"><span style="color:#e8e8e8">.li-h200 </span><span style="color:#a8a8a8">{</span></div>
<div style="left:2339px;top:464.00px;line-height:21px;font-family:'Liberation Mono', monospace;font-size:16.5px;color:#b5b5b5;white-space:pre;text-decoration:underline;text-underline-offset:1px">app.wxss:8649</div>
<div style="left:1794.5px;top:487.80px;line-height:22px;font-family:'Liberation Mono', monospace;font-size:16.5px;color:#e8e8e8;white-space:pre;"><span style=""><span style="color:#35d4c7">height</span><span style="color:#e8e8e8">: </span><span style="color:#e8e8e8">200rpx;</span></span></div>
<div style="left:1768px;top:509.80px;line-height:22px;font-family:'Liberation Mono', monospace;font-size:16.5px;color:#e8e8e8;white-space:pre;"><span style="color:#a8a8a8">}</span></div>
<div style="left:1762px;top:537px;width:709px;height:1.3px;background:#404040"></div>
<div style="left:1768px;top:542.00px;line-height:22px;font-family:'Liberation Mono', monospace;font-size:16.5px;color:#e8e8e8;white-space:pre;"><span style="color:#e8e8e8">.li-bg-red </span><span style="color:#a8a8a8">{</span></div>
<div style="left:2339px;top:542.50px;line-height:21px;font-family:'Liberation Mono', monospace;font-size:16.5px;color:#b5b5b5;white-space:pre;text-decoration:underline;text-underline-offset:1px">app.wxss:8649</div>
<div style="left:1794.5px;top:566.30px;line-height:22px;font-family:'Liberation Mono', monospace;font-size:16.5px;color:#e8e8e8;white-space:pre;"><span style=""><span style="color:#35d4c7">--un-bg-opacity</span><span style="color:#e8e8e8">: </span><span style="color:#e8e8e8">1;</span></span></div>
<div style="left:1794.5px;top:588.30px;line-height:22px;font-family:'Liberation Mono', monospace;font-size:16.5px;color:#e8e8e8;white-space:pre;"><span style=""><span style="color:#35d4c7">background-color</span><span style="color:#e8e8e8">: </span><span style="color:#e8e8e8">rgba(248,113,113,var(--un-bg-opacity));</span></span></div>
<div style="left:1768px;top:610.30px;line-height:22px;font-family:'Liberation Mono', monospace;font-size:16.5px;color:#e8e8e8;white-space:pre;"><span style="color:#a8a8a8">}</span></div>
<div style="left:1762px;top:639.7px;width:709px;height:1.3px;background:#404040"></div>
<div style="left:1768px;top:645.00px;line-height:22px;font-family:'Liberation Mono', monospace;font-size:16.5px;color:#e8e8e8;white-space:pre;"><span style="color:#e8e8e8">.li-bg--w-333 </span><span style="color:#a8a8a8">{</span></div>
<div style="left:2339px;top:645.50px;line-height:21px;font-family:'Liberation Mono', monospace;font-size:16.5px;color:#b5b5b5;white-space:pre;text-decoration:underline;text-underline-offset:1px">app.wxss:8649</div>
<div style="left:1794.5px;top:669.30px;line-height:22px;font-family:'Liberation Mono', monospace;font-size:16.5px;color:#e8e8e8;white-space:pre;"><span style="text-decoration:line-through;text-decoration-color:#e8e8e8;"><span style="color:#35d4c7">--un-bg-opacity</span><span style="color:#e8e8e8">: </span><span style="color:#e8e8e8">1;</span></span></div>
<div style="left:1794.5px;top:691.30px;line-height:22px;font-family:'Liberation Mono', monospace;font-size:16.5px;color:#e8e8e8;white-space:pre;"><span style="text-decoration:line-through;text-decoration-color:#e8e8e8;"><span style="color:#35d4c7">background-color</span><span style="color:#e8e8e8">: </span><span style="color:#e8e8e8">rgba(51,51,51,var(--un-bg-opacity));</span></span></div>
<div style="left:1768px;top:713.30px;line-height:22px;font-family:'Liberation Mono', monospace;font-size:16.5px;color:#e8e8e8;white-space:pre;"><span style="color:#a8a8a8">}</span></div>
<div style="left:1762px;top:740px;width:709px;height:1.3px;background:#404040"></div>
<div style="left:1768px;top:745.60px;line-height:22px;font-family:'Liberation Mono', monospace;font-size:16.5px;color:#e8e8e8;white-space:pre;"><span style="color:#e8e8e8">.li-p-y-10 </span><span style="color:#a8a8a8">{</span></div>
<div style="left:2339px;top:746.10px;line-height:21px;font-family:'Liberation Mono', monospace;font-size:16.5px;color:#b5b5b5;white-space:pre;text-decoration:underline;text-underline-offset:1px">app.wxss:8649</div>
<div style="left:1794.5px;top:769.90px;line-height:22px;font-family:'Liberation Mono', monospace;font-size:16.5px;color:#e8e8e8;white-space:pre;"><span style=""><span style="color:#35d4c7">padding-top</span><span style="color:#e8e8e8">: </span><span style="color:#e8e8e8">80rpx;</span></span></div>
<div style="left:1794.5px;top:791.90px;line-height:22px;font-family:'Liberation Mono', monospace;font-size:16.5px;color:#e8e8e8;white-space:pre;"><span style=""><span style="color:#35d4c7">padding-bottom</span><span style="color:#e8e8e8">: </span><span style="color:#e8e8e8">80rpx;</span></span></div>
<div style="left:1768px;top:813.90px;line-height:22px;font-family:'Liberation Mono', monospace;font-size:16.5px;color:#e8e8e8;white-space:pre;"><span style="color:#a8a8a8">}</span></div>
<div style="left:1762px;top:842px;width:709px;height:1.3px;background:#404040"></div>
<div style="left:1768px;top:848.00px;line-height:22px;font-family:'Liberation Mono', monospace;font-size:16.5px;color:#e8e8e8;white-space:pre;"><span style="color:#e8e8e8">.li-p-x-6 </span><span style="color:#a8a8a8">{</span></div>
<div style="left:2339px;top:848.50px;line-height:21px;font-family:'Liberation Mono', monospace;font-size:16.5px;color:#b5b5b5;white-space:pre;text-decoration:underline;text-underline-offset:1px">app.wxss:8649</div>
<div style="left:1794.5px;top:872.30px;line-height:22px;font-family:'Liberation Mono', monospace;font-size:16.5px;color:#e8e8e8;white-space:pre;"><span style=""><span style="color:#35d4c7">padding-left</span><span style="color:#e8e8e8">: </span><span style="color:#e8e8e8">48rpx;</span></span></div>
<div style="left:1794.5px;top:894.30px;line-height:22px;font-family:'Liberation Mono', monospace;font-size:16.5px;color:#e8e8e8;white-space:pre;"><span style=""><span style="color:#35d4c7">padding-right</span><span style="color:#e8e8e8">: </span><span style="color:#e8e8e8">48rpx;</span></span></div>
<div style="left:1768px;top:916.30px;line-height:22px;font-family:'Liberation Mono', monospace;font-size:16.5px;color:#e8e8e8;white-space:pre;"><span style="color:#a8a8a8">}</span></div>
<div style="left:1763px;top:368.8px;width:612px;height:571.2px;box-sizing:border-box;border:2px solid #e8202a"></div>
<div style="left:1762px;top:943.3px;width:709px;height:1.3px;background:#404040"></div>
<div style="left:1768px;top:948.00px;line-height:22px;font-family:'Liberation Mono', monospace;font-size:16.5px;color:#e8e8e8;white-space:pre;font-style:italic"><span style="color:#e8e8e8">view </span><span style="color:#a8a8a8">{</span></div>
<div style="left:2260px;top:948.00px;line-height:22px;font-family:'Liberation Mono', monospace;font-size:16.5px;color:#e0e0e0;white-space:pre;font-style:italic">user agent stylesheet</div>
<div style="left:1794.5px;top:973.50px;line-height:22px;font-family:'Liberation Mono', monospace;font-size:16.5px;color:#e8e8e8;white-space:pre;font-style:italic"><span style="color:#35d4c7">display</span><span style="color:#e8e8e8">: block;</span></div>
<div style="left:1768px;top:995.00px;line-height:22px;font-family:'Liberation Mono', monospace;font-size:16.5px;color:#e8e8e8;white-space:pre;font-style:italic"><span style="color:#a8a8a8">}</span></div>
<div style="left:1762px;top:1023.6px;width:709px;height:1.3px;background:#404040"></div>
<div style="left:1768px;top:1028.00px;line-height:22px;font-family:'Liberation Mono', monospace;font-size:16.5px;color:#e8e8e8;white-space:pre;font-style:italic"><span style="color:#e8e8e8">* </span><span style="color:#a8a8a8">{</span></div>
<div style="left:2260px;top:1028.00px;line-height:22px;font-family:'Liberation Mono', monospace;font-size:16.5px;color:#e0e0e0;white-space:pre;font-style:italic">user agent stylesheet</div>
<div style="left:1794.5px;top:1053.00px;line-height:22px;font-family:'Liberation Mono', monospace;font-size:16.5px;color:#e8e8e8;white-space:pre;font-style:italic"><span style="color:#35d4c7">margin</span><span style="color:#e8e8e8">: 0;</span></div>
<div style="left:1768px;top:1075.00px;line-height:22px;font-family:'Liberation Mono', monospace;font-size:16.5px;color:#e8e8e8;white-space:pre;font-style:italic"><span style="color:#a8a8a8">}</span></div>
</body></html>
